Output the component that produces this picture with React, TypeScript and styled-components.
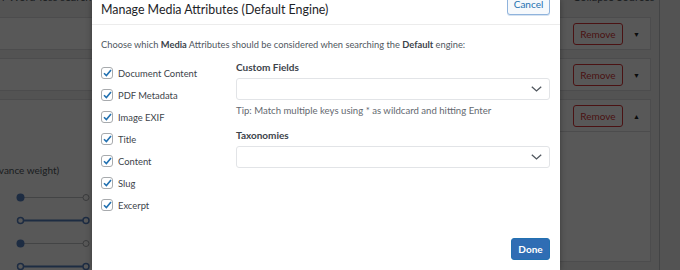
import React from 'react';
import styled, { createGlobalStyle } from 'styled-components';

const GlobalStyle = createGlobalStyle`
  html, body {
    margin: 0;
    padding: 0;
    background: #f0f0f1;
  }
  * {
    box-sizing: border-box;
  }
`;

const Screen = styled.div`
  position: relative;
  width: 680px;
  height: 270px;
  overflow: hidden;
  display: grid;
  grid-template-columns: 92px 468px 120px;
  font-family: Lato, "Open Sans", sans-serif;
  background: #f0f0f1;
`;

/* ---------- admin page behind the modal ---------- */

const BackPane = styled.div`
  position: relative;
  overflow: hidden;
  display: flex;
  flex-direction: column;
`;

const CutText = styled.div<{ $indent?: number }>`
  flex: none;
  height: 26px;
  margin-top: -9px;
  margin-left: ${(p) => p.$indent ?? 0}px;
  font-size: 11px;
  line-height: 12px;
  color: #50575e;
  white-space: nowrap;
`;

const Card = styled.div<{ $tall?: boolean; $side: 'left' | 'right' }>`
  height: ${(p) => (p.$tall ? 'auto' : '33px')};
  flex: ${(p) => (p.$tall ? '1 0 auto' : 'none')};
  margin-bottom: 8px;
  border-top: 1px solid #dcdcde;
  border-bottom: 1px solid #dcdcde;
  background: #fff;
  ${(p) => (p.$side === 'right' ? 'margin-right: 29px; border-right: 1px solid #dcdcde;' : '')}
`;

const CardHead = styled.div<{ $divided?: boolean }>`
  height: 32px;
  display: flex;
  align-items: center;
  gap: 10px;
  padding-left: 13px;
  border-bottom: ${(p) => (p.$divided ? '1px solid #dcdcde' : 'none')};
`;

const RemoveButton = styled.div`
  width: 50px;
  height: 22px;
  border: 1px solid #d63638;
  border-radius: 3px;
  display: flex;
  align-items: center;
  justify-content: center;
  font-size: 10px;
  color: #d63638;
`;

const Caret = styled.span`
  font-size: 7px;
  color: #1d2327;
`;

const WeightLabel = styled.div`
  margin-top: 31px;
  margin-left: -20px;
  font-size: 10px;
  line-height: 14px;
  color: #50575e;
  white-space: nowrap;
`;

const SliderList = styled.div`
  display: flex;
  flex-direction: column;
  gap: 14px;
  margin-top: 16px;
  padding-left: 16px;

  svg {
    display: block;
  }
`;

const SideRule = styled.div`
  position: absolute;
  top: 0;
  bottom: 0;
  right: 20px;
  width: 1px;
  background: #c3c4c7;
`;

const Overlay = styled.div`
  position: absolute;
  inset: 0;
  z-index: 1;
  background: rgba(0, 0, 0, 0.655);
`;

/* ---------- modal ---------- */

const Modal = styled.div`
  background: #fff;
  display: flex;
  flex-direction: column;
  box-shadow: 0 0 6px rgba(0, 0, 0, 0.35);
  position: relative;
  z-index: 2;
`;

const Header = styled.div`
  height: 35px;
  margin-top: -10px;
  display: flex;
  align-items: center;
  justify-content: space-between;
  padding: 0 10px 0 9px;
  border-bottom: 1px solid #ececec;
`;

const Title = styled.h1`
  margin: 0;
  padding-top: 5px;
  font-size: 12.4px;
  font-weight: 400;
  color: #1d2327;
`;

const CancelButton = styled.button`
  margin-bottom: 6px;
  height: 22px;
  width: 43px;
  padding: 0;
  border: 1px solid #8fb3dc;
  border-radius: 3px;
  background: #f6f9fc;
  color: #2271b1;
  font-family: inherit;
  font-size: 10px;
  box-shadow: 0 1px 0 #d6e3f1;
`;

const Body = styled.div`
  flex: 1;
  padding: 12px 10px 0 9px;
  display: flex;
  flex-direction: column;
`;

const Intro = styled.p`
  margin: 0;
  font-size: 9.3px;
  line-height: 15px;
  color: #50575e;
  white-space: nowrap;

  b {
    font-weight: 700;
    color: #3c434a;
  }
`;

const Columns = styled.div`
  display: grid;
  grid-template-columns: 135px 1fr;
  margin-top: 8px;
`;

const CheckList = styled.div`
  display: flex;
  flex-direction: column;
  padding-top: 2px;
`;

const CheckRow = styled.label`
  height: 22px;
  display: flex;
  align-items: center;
  gap: 5px;
  font-size: 9.4px;
  color: #3c434a;
`;

const Box = styled.span`
  width: 12px;
  height: 12px;
  border: 1px solid #a7aaad;
  border-radius: 3px;
  display: flex;
  align-items: center;
  justify-content: center;
  background: #fff;
`;

const Fields = styled.div`
  display: flex;
  flex-direction: column;
`;

const FieldLabel = styled.div<{ $spaced?: boolean }>`
  font-size: 10px;
  font-weight: 700;
  line-height: 14px;
  color: #3c434a;
  margin-top: ${(p) => (p.$spaced ? '10px' : '0')};
  margin-bottom: 4px;
`;

const SelectBox = styled.div`
  height: 22px;
  border: 1px solid #e2e4e7;
  border-radius: 3px;
  display: flex;
  align-items: center;
  justify-content: flex-end;
  padding-right: 7px;
`;

const Tip = styled.div`
  margin-top: 3px;
  font-size: 9.6px;
  line-height: 15px;
  color: #646970;
`;

const Footer = styled.div`
  display: flex;
  justify-content: flex-end;
  padding: 0 10px 10px 0;
`;

const DoneButton = styled.button`
  width: 39px;
  height: 22px;
  padding: 0;
  border: 1px solid #2271b1;
  border-radius: 3px;
  background: #2f6db4;
  color: #fff;
  font-family: inherit;
  font-size: 10px;
  font-weight: 700;
`;

const attributes = [
  'Document Content',
  'PDF Metadata',
  'Image EXIF',
  'Title',
  'Content',
  'Slug',
  'Excerpt',
];

function Check() {
  return (
    <svg width="9" height="8" viewBox="0 0 9 8">
      <path d="M1 4.2 L3.4 6.6 L8 1" fill="none" stroke="#2271b1" strokeWidth="1.6" />
    </svg>
  );
}

function Chevron() {
  return (
    <svg width="11" height="6" viewBox="0 0 11 6">
      <path d="M0.8 0.8 L5.5 5 L10.2 0.8" fill="none" stroke="#50575e" strokeWidth="1.3" />
    </svg>
  );
}

const navy = '#557fc0';

function Slider({ filled }: { filled: boolean }) {
  return (
    <svg width="80" height="9" viewBox="0 0 80 9">
      {filled ? (
        <>
          <line x1="4" y1="4.5" x2="70" y2="4.5" stroke="#c3c4c7" strokeWidth="1" />
          <circle cx="4.5" cy="4.5" r="4" fill={navy} />
          <circle cx="70" cy="4.5" r="3" fill="#fff" stroke="#a7aaad" strokeWidth="1" />
        </>
      ) : (
        <>
          <line x1="4" y1="4.5" x2="70" y2="4.5" stroke={navy} strokeWidth="2" />
          <circle cx="4.5" cy="4.5" r="3" fill="#fff" stroke={navy} strokeWidth="1.5" />
          <circle cx="70" cy="4.5" r="3" fill="#fff" stroke={navy} strokeWidth="1.5" />
        </>
      )}
    </svg>
  );
}

export default function App() {
  return (
    <>
      <GlobalStyle />
      <Screen>
        <BackPane>
          <CutText $indent={2}>r Word-less searches,</CutText>
          <Card $side="left" />
          <Card $side="left" />
          <Card $side="left" $tall>
            <CardHead />
            <WeightLabel>(relevance weight)</WeightLabel>
            <SliderList>
              <Slider filled />
              <Slider filled={false} />
              <Slider filled />
              <Slider filled={false} />
            </SliderList>
          </Card>
        </BackPane>

        <Modal>
          <Header>
            <Title>Manage Media Attributes (Default Engine)</Title>
            <CancelButton>Cancel</CancelButton>
          </Header>
          <Body>
            <Intro>
              Choose which <b>Media</b> Attributes should be considered when searching the{' '}
              <b>Default</b> engine:
            </Intro>
            <Columns>
              <CheckList>
                {attributes.map((name) => (
                  <CheckRow key={name}>
                    <Box>
                      <Check />
                    </Box>
                    {name}
                  </CheckRow>
                ))}
              </CheckList>
              <Fields>
                <FieldLabel>Custom Fields</FieldLabel>
                <SelectBox>
                  <Chevron />
                </SelectBox>
                <Tip>Tip: Match multiple keys using * as wildcard and hitting Enter</Tip>
                <FieldLabel $spaced>Taxonomies</FieldLabel>
                <SelectBox>
                  <Chevron />
                </SelectBox>
              </Fields>
            </Columns>
          </Body>
          <Footer>
            <DoneButton>Done</DoneButton>
          </Footer>
        </Modal>

        <BackPane>
          <CutText $indent={13}>Collapse Sources</CutText>
          <Card $side="right">
            <CardHead>
              <RemoveButton>Remove</RemoveButton>
              <Caret>▼</Caret>
            </CardHead>
          </Card>
          <Card $side="right">
            <CardHead>
              <RemoveButton>Remove</RemoveButton>
              <Caret>▼</Caret>
            </CardHead>
          </Card>
          <Card $side="right" $tall>
            <CardHead $divided>
              <RemoveButton>Remove</RemoveButton>
              <Caret>▲</Caret>
            </CardHead>
          </Card>
          <SideRule />
        </BackPane>

        <Overlay />
      </Screen>
    </>
  );
}
